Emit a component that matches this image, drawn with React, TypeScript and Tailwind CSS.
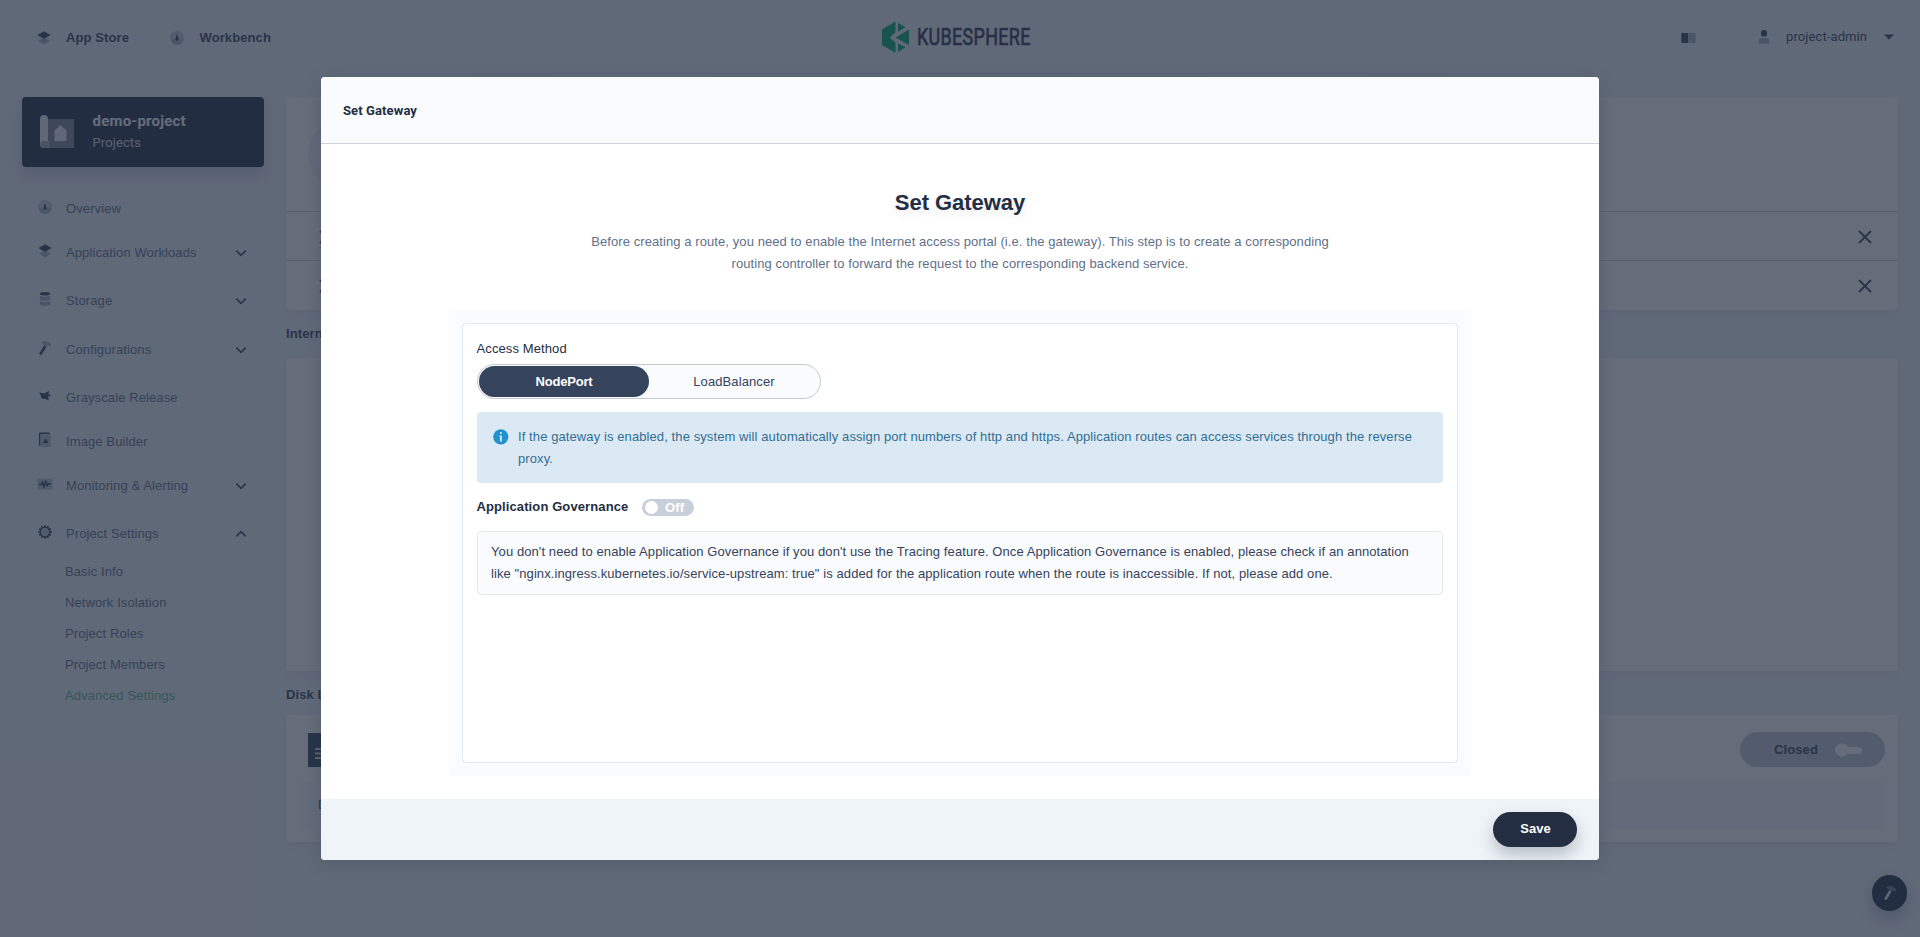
import React from "react";

type IconProps = { className?: string };

const DARK = "#324558";
const LIGHT = "#b6c2cd";
const MUTED = "#a6b3c0";

const Layers = ({ className }: IconProps) => (
  <svg viewBox="0 0 16 16" className={className ?? "size-4"}>
    <path d="M8 7.5 14.2 10.8 8 14.4 1.8 10.8Z" fill={MUTED} />
    <path d="M8 1.2 14.6 5 8 9 1.4 5Z" fill={DARK} />
  </svg>
);

const Gauge = () => (
  <svg viewBox="0 0 16 16" className="size-4">
    <circle cx="8" cy="8" r="6.2" fill="#c9d2da" stroke={MUTED} strokeWidth="1" />
    <path d="M2 9h12a6 6 0 0 1-12 0Z" fill={MUTED} />
    <path d="M8 3.2 9.4 8.6a1.5 1.5 0 1 1-2.8 0Z" fill={DARK} />
  </svg>
);

const Database = () => (
  <svg viewBox="0 0 16 16" className="size-4">
    <path d="M2.8 4.6c2 1.4 8.4 1.4 10.4 0v4.1c-2 1.2-8.4 1.2-10.4 0Z" fill={MUTED} />
    <path d="M2.8 9.900c2 1.2 8.4 1.2 10.4 0v3.8c-2 1.6-8.4 1.6-10.4 0Z" fill={MUTED} />
    <ellipse cx="8" cy="2.8" rx="5.2" ry="1.8" fill={DARK} />
  </svg>
);

const Hammer = ({ head = MUTED, handle = DARK }: { head?: string; handle?: string }) => (
  <svg viewBox="0 0 16 16" className="size-4">
    <path d="m7.2 5.2 2.4 1.4L4.3 15.2 2 13.9Z" fill={handle} />
    <path d="M3.4 2.4C6.5.6 9.6.6 12 2.6l2.6 1.6-1.4 2.4-2.3-1.1-1.6.6-2.6-1.4C6.4 3.4 5 2.9 3.4 2.4Z" fill={head} />
  </svg>
);

const Bird = () => (
  <svg viewBox="0 0 16 16" className="size-4">
    <path d="M2.4 4.4 7.3 5.4 12.4 2.8 11.4 6 14.2 7.2 11.3 8.6 11.6 12.4 8.2 10.8C5.6 11.6 3.6 9.4 3.8 7.4Z" fill={DARK} />
  </svg>
);

const ImageFile = () => (
  <svg viewBox="0 0 16 16" className="size-4">
    <path d="M3.2 2.2h10.6v12.8H4.6L3.2 13.6Z" fill={LIGHT} />
    <path d="M2 .6h10.6v1.3H3.2V14H2Z" fill={DARK} />
    <path d="M8.8 6.6 11.6 11H6Z" fill={DARK} />
  </svg>
);

const Monitor = () => (
  <svg viewBox="0 0 16 16" className="size-4">
    <rect x="0.5" y="2.8" width="15" height="10.6" rx="0.8" fill={LIGHT} />
    <path d="M2 8.6h2.2l1.5-2.4 1.2 4.6 2-5 1.3 3.6 1.3-1.6H14" fill="none" stroke={DARK} strokeWidth="1.5" />
  </svg>
);

const TEETH = [0, 30, 60, 90, 120, 150, 180, 210, 240, 270, 300, 330];

const Gear = () => (
  <svg viewBox="0 0 16 16" className="size-4">
    {TEETH.map((a) => (
      <rect key={a} x="7.2" y="1.2" width="1.6" height="2.4" fill={DARK} transform={`rotate(${a} 8 8)`} />
    ))}
    <circle cx="8" cy="8" r="4.7" fill="#dfe6ec" stroke={DARK} strokeWidth="1.6" />
    <circle cx="8" cy="8" r="2.9" fill={LIGHT} />
  </svg>
);

const Chevron = ({ up }: { up?: boolean }) => (
  <svg viewBox="0 0 12 8" className="h-2 w-3">
    <path d={up ? "M1.3 6.4 6 1.7 10.7 6.4" : "M1.3 1.6 6 6.3 10.7 1.6"} fill="none" stroke={DARK} strokeWidth="1.7" />
  </svg>
);

const Cross = () => (
  <svg viewBox="0 0 14 14" className="size-3.5">
    <path d="M1 1 13 13M13 1 1 13" fill="none" stroke={DARK} strokeWidth="1.8" />
  </svg>
);

const Logo = () => (
  <div className="flex items-center">
    <svg viewBox="0 0 34 34" className="size-[34px] shrink-0">
      <g fill="#00aa72">
        <path d="M14.5 1.5V12.6L8.6 17.5 14.5 22.4V33L1 25V9.5Z" />
        <path d="M17 2.8 24.6 7.4 17 11.4Z" />
        <path d="M28 9.4V25.2L14.6 17.6Z" />
        <path d="M17 23.2 24.6 27.4 17 32Z" />
      </g>
    </svg>
    <span className="mt-px ml-[1.5px] origin-left scale-x-[0.765] font-['Roboto',sans-serif] text-[23.5px] leading-[34px] font-normal tracking-[0.4px] whitespace-nowrap text-[#303250] [-webkit-text-stroke:0.7px_#303250]">
      KUBESPHERE
    </span>
  </div>
);

type NavItem = { label: string; icon: React.ReactNode; height: string; arrow?: "up" | "down" };

const nav: NavItem[] = [
  { label: "Overview", icon: <Gauge />, height: "h-11" },
  { label: "Application Workloads", icon: <Layers />, height: "h-11", arrow: "down" },
  { label: "Storage", icon: <Database />, height: "h-[52px]", arrow: "down" },
  { label: "Configurations", icon: <Hammer />, height: "h-[45px]", arrow: "down" },
  { label: "Grayscale Release", icon: <Bird />, height: "h-[51px]" },
  { label: "Image Builder", icon: <ImageFile />, height: "h-[37px]" },
  { label: "Monitoring & Alerting", icon: <Monitor />, height: "h-[51px]", arrow: "down" },
  { label: "Project Settings", icon: <Gear />, height: "h-[45px]", arrow: "up" },
];

const settings = ["Basic Info", "Network Isolation", "Project Roles", "Project Members", "Advanced Settings"];

function TopBar() {
  return (
    <header className="flex h-[73px] items-center pt-[2px]">
      <div className="flex w-[881px] shrink-0 items-center pl-9 font-bold text-[#36435c]">
        <Layers />
        <span className="ml-[14px] w-[64px] whitespace-nowrap">App Store</span>
        <span className="ml-[39px] flex">
          <Gauge />
        </span>
        <span className="ml-[14.5px] whitespace-nowrap">Workbench</span>
      </div>
      <div className="-mt-[2px] flex w-[200px] shrink-0">
        <Logo />
      </div>
      <div className="flex flex-1 items-center justify-end pr-[25px]">
        <svg viewBox="0 0 16 12" className="h-3 w-4">
          <rect x="1.3" y="1" width="6.8" height="10" fill={DARK} />
          <rect x="8.1" y="1" width="7.4" height="10" fill={MUTED} />
        </svg>
        <svg viewBox="0 0 16 16" className="-mt-px ml-[60px] size-4">
          <rect x="5" y="1" width="6" height="6.6" rx="2.6" fill={DARK} />
          <path d="M2.6 14.8V12a3 3 0 0 1 3-3h4.8a3 3 0 0 1 3 3v2.8Z" fill={MUTED} />
        </svg>
        <span className="-mt-[2px] ml-[14px] w-[82px] whitespace-nowrap font-['Roboto',sans-serif] text-[13px] text-[#36435c]">
          project-admin
        </span>
        <svg viewBox="0 0 12 6" className="-mt-px ml-[15px] h-1.5 w-3">
          <path d="M1 .5h10L6 5.5Z" fill={DARK} />
        </svg>
      </div>
    </header>
  );
}

function Sidebar() {
  return (
    <aside className="w-[242px] shrink-0">
      <div className="flex h-[70px] items-center rounded bg-[#242e42] pl-4 shadow-[0_8px_16px_rgba(36,46,66,0.2)]">
        <svg viewBox="0 0 40 40" className="size-10">
          <path d="M8 7h28v29H8Z" fill="#7d8593" />
          <path d="M2 7a4 4 0 0 1 8 0v25H2Z" fill="#eef1f4" />
          <path d="M2 31a4 4 0 0 1 4-2h6v7H5a3 3 0 0 1-3-3Z" fill="#a3abb5" />
          <path d="M16.5 29V18.6L22.5 13 28.5 18.6V29Z" fill="#eef1f4" />
        </svg>
        <div className="-mt-px ml-[14.5px]">
          <div className="font-['Roboto',sans-serif] text-[15px] leading-[22px] font-bold tracking-[0.2px] text-white">
            demo-project
          </div>
          <div className="font-['Roboto',sans-serif] leading-[21px] text-[#d8dee5]">Projects</div>
        </div>
      </div>
      <nav className="mt-5 pr-[17px] pl-[15px] text-[#5f708a]">
        {nav.map((n) => (
          <div key={n.label} className={`flex items-center ${n.height}`}>
            <span className="-mt-1 flex">{n.icon}</span>
            <span className="ml-[13px] flex-1 whitespace-nowrap">{n.label}</span>
            {n.arrow && <Chevron up={n.arrow === "up"} />}
          </div>
        ))}
        <ul className="pl-7">
          {settings.map((s) => (
            <li
              key={s}
              className={`flex h-[31px] items-center whitespace-nowrap ${s === "Advanced Settings" ? "text-[#55bc8a]" : ""}`}
            >
              {s}
            </li>
          ))}
        </ul>
      </nav>
    </aside>
  );
}

const card = "rounded bg-white shadow-[0_4px_8px_rgba(36,46,66,0.06)]";

function Content() {
  return (
    <main className="ml-[22px] flex flex-1 flex-col">
      <section className={`h-[213px] ${card}`}>
        <div className="flex h-[114px] items-center pl-[22px]">
          <div className="size-[72px] rounded-full bg-[#eff4f9]" />
        </div>
        {[0, 1].map((i) => (
          <div
            key={i}
            className="flex h-[49px] items-center justify-between border-t border-[#d8dee5] pt-[2px] pr-[26px] pl-[33px]"
          >
            <Cross />
            <Cross />
          </div>
        ))}
      </section>
      <h3 className="flex h-[48px] items-center font-bold text-[#36435c]">Internet Access</h3>
      <section className={`h-[313px] ${card}`} />
      <h3 className="flex h-[44px] items-center pt-[3px] font-bold text-[#36435c]">Disk Log Collection</h3>
      <section className={`h-[127px] px-[13px] pt-[17px] ${card}`}>
        <div className="flex h-[35px] items-center justify-between pl-[9px]">
          <svg viewBox="0 0 34 34" className="size-[34px]">
            <rect width="34" height="34" fill="#324558" />
            <path d="M7 16h20M7 20.5h20M7 25h20" stroke="#d8dee5" strokeWidth="2.2" />
          </svg>
          <div className="flex h-[35px] w-[145px] items-center rounded-full bg-[#c1c9d1] pl-[34px] font-bold text-[#36435c]">
            <span className="w-[60px]">Closed</span>
            <svg viewBox="0 0 30 14" className="h-3.5 w-[30px]">
              <rect x="10" y="4" width="18" height="7" rx="3.5" fill="#fff" />
              <rect x="1" y="0.5" width="14" height="13" rx="6.5" fill="#fff" />
            </svg>
          </div>
        </div>
        <div className="mt-[14px] flex h-[48px] items-center rounded bg-[#f9fbfd] pl-[19px] text-[#36435c]">
          Disk log collection is closed
        </div>
      </section>
    </main>
  );
}

function Modal() {
  return (
    <div className="flex h-[783px] w-[1278px] flex-col overflow-hidden rounded bg-white shadow-[0_4px_16px_rgba(36,46,66,0.2)]">
      <div className="flex h-[67px] items-center border-b border-[#ccd3db] bg-[#f9fbfd] pt-[2px] pl-[22px] font-['Roboto',sans-serif] text-[13px] font-bold text-[#242e42]">
        Set Gateway
      </div>
      <div className="flex flex-1 flex-col items-center">
        <h2 className="mt-[43px] text-[22px] leading-8 font-bold tracking-[-0.05px] text-[#242e42] [text-shadow:0_4px_8px_rgba(36,46,66,0.1)]">
          Set Gateway
        </h2>
        <p className="mt-[12px] text-center leading-[22px] tracking-[0.085px] text-[#5f708a]">
          Before creating a route, you need to enable the Internet access portal (i.e. the gateway). This step is to create a
          corresponding
          <br />
          routing controller to forward the request to the corresponding backend service.
        </p>
        <div className="mt-[35px] h-[466px] w-[1022px] rounded bg-[#f9fbfd] p-[13px]">
          <div className="flex h-full flex-col rounded border border-[#e3e9ef] bg-white px-[14px] pt-[15px]">
            <div className="-ml-[0.5px] leading-5 text-[#242e42]">Access Method</div>
            <div className="mt-[5px] flex h-[35px] w-[344px] items-center rounded-full border border-[#c1c9d1] bg-[#f9fbfd] px-px">
              <div className="flex h-[31px] w-[170px] items-center justify-center rounded-full bg-[#36435c] font-bold tracking-[-0.2px] text-white">
                NodePort
              </div>
              <div className="flex flex-1 items-center justify-center text-[#36435c]">LoadBalancer</div>
            </div>
            <div className="mt-[13px] flex h-[71px] rounded bg-[#dbe9f5] pt-[14px] pl-4 leading-[22px] tracking-[0.095px] text-[#326e93]">
              <svg viewBox="0 0 16 16" className="mt-[3px] size-4">
                <circle cx="7.8" cy="7.8" r="7.6" fill="#1f93cf" />
                <path d="M7 3h1.8v1.8H7ZM6.2 6.4h2.6v6H7V7.4h-.8Z" fill="#dbe9f5" />
              </svg>
              <p className="ml-[9px] whitespace-nowrap">
                If the gateway is enabled, the system will automatically assign port numbers of http and https. Application
                routes can access services through the reverse
                <br />
                proxy.
              </p>
            </div>
            <div className="mt-[14px] flex h-5 items-center">
              <span className="-ml-[0.5px] w-[165.5px] font-bold whitespace-nowrap text-[#242e42]">
                Application Governance
              </span>
              <div className="mt-px flex h-[17px] w-[52px] items-center rounded-full bg-[#c7d0da] pl-[3px]">
                <div className="size-[13px] rounded-full bg-white" />
                <span className="ml-[7px] font-bold text-white">Off</span>
              </div>
            </div>
            <div className="mt-[14px] h-[64px] rounded border border-[#e3e9ef] bg-[#f9fbfd] pt-[9px] pl-[13px] leading-[22px] tracking-[0.088px] whitespace-nowrap text-[#36435c]">
              You don't need to enable Application Governance if you don't use the Tracing feature. Once Application
              Governance is enabled, please check if an annotation
              <br />
              like "nginx.ingress.kubernetes.io/service-upstream: true" is added for the application route when the route is
              inaccessible. If not, please add one.
            </div>
          </div>
        </div>
      </div>
      <div className="flex h-[61px] items-center justify-end bg-[#eff4f8] pr-[22px]">
        <button className="h-[35px] w-[84px] rounded-full bg-[#242e42] pb-[2px] pl-px font-bold tracking-normal text-white shadow-[0_8px_16px_rgba(36,46,66,0.28)]">
          Save
        </button>
      </div>
    </div>
  );
}

export default function App() {
  return (
    <div className="relative h-[937px] w-[1920px] overflow-hidden bg-[#eff4f9] font-['Liberation_Sans',sans-serif] text-[13px] leading-5 tracking-[0.105px]">
      <TopBar />
      <div className="mx-auto h-px w-[1412px] bg-linear-to-r from-transparent via-[#ccd3db] to-transparent" />
      <div className="mt-[23px] flex items-start pr-[22px] pl-[22px]">
        <Sidebar />
        <Content />
      </div>
      <div className="absolute top-[875px] left-[1872px] flex h-9 w-[35px] items-center justify-center rounded-full bg-[#242e42] shadow-[0_8px_16px_rgba(36,46,66,0.28)]">
        <Hammer head="#6b7480" handle="#e3e9ef" />
      </div>
      <div className="absolute inset-0 flex items-start justify-center bg-[#242e42]/70 pt-[77px]">
        <Modal />
      </div>
    </div>
  );
}
